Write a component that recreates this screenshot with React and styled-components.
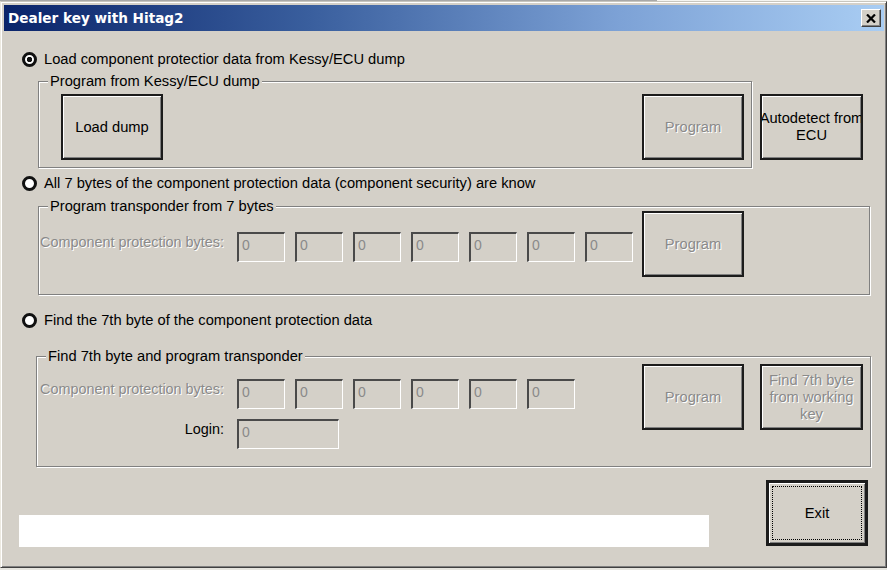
import styled, { createGlobalStyle, css } from "styled-components";

const GlobalStyle = createGlobalStyle`
  html, body {
    margin: 0;
    padding: 0;
    background: #e9e8e2;
  }
  body {
    font-family: "Liberation Sans", Arial, sans-serif;
  }
`;

const Screen = styled.div`
  width: 887px;
  height: 570px;
  overflow: hidden;
  background: #e6e5df;
  display: flex;
  flex-direction: column;
`;

const BackStrip = styled.div`
  height: 1px;
  display: flex;
`;

const BackPane = styled.div`
  width: ${(p) => p.$w};
  background: ${(p) => p.$bg};
`;

const Window = styled.div`
  width: 887px;
  height: 567px;
  box-sizing: border-box;
  background: #d4d0c8;
  border: 1px solid;
  border-color: #c8c6be #404040 #404040 #ece9e0;
  box-shadow: inset 1px 1px 0 #ffffff, inset -1px -1px 0 #808080;
  padding: 3px 2px 2px 3px;
  display: flex;
  flex-direction: column;
`;

const TitleBar = styled.div`
  height: 26px;
  display: flex;
  align-items: center;
  justify-content: space-between;
  padding: 0 3px 0 4px;
  background: linear-gradient(to right, #0a246a 0%, #3a5f9e 35%, #7da2d6 70%, #a9cdf3 100%);
`;

const Title = styled.span`
  color: #ffffff;
  font-family: "DejaVu Sans", Verdana, sans-serif;
  font-weight: bold;
  font-size: 13.6px;
`;

const CloseButton = styled.button`
  width: 20px;
  height: 18px;
  padding: 0;
  box-sizing: border-box;
  background: #d4d0c8;
  border: 1px solid;
  border-color: #ffffff #404040 #404040 #ffffff;
  box-shadow: inset -1px -1px 0 #808080;
  display: flex;
  align-items: center;
  justify-content: center;
`;

const Content = styled.div`
  flex: 1;
  display: flex;
  flex-direction: column;
  padding-left: 15px;
  font-size: 14.7px;
`;

const RadioRow = styled.label`
  display: flex;
  align-items: center;
  gap: 7px;
  height: 16px;
  margin-top: ${(p) => p.$top}px;
  margin-left: 3px;
  color: #000;
`;

const RadioDot = styled.span`
  width: 15px;
  height: 15px;
  box-sizing: border-box;
  border-radius: 50%;
  border: 3px solid #111;
  background: ${(p) =>
    p.$checked
      ? "radial-gradient(circle, #111 0 2.4px, #ffffff 3px)"
      : "#ffffff"};
`;

const SectionRow = styled.div`
  display: flex;
  align-items: flex-start;
  gap: 8px;
  margin-top: ${(p) => p.$top}px;
  margin-left: ${(p) => p.$left}px;
`;

const Group = styled.fieldset`
  margin: 0;
  padding: 0;
  width: ${(p) => p.$w}px;
  box-sizing: border-box;
  min-width: 0;
  border: 1px solid #808080;
  box-shadow: 1px 1px 0 #ffffff, inset 1px 1px 0 #ffffff;
`;

const Legend = styled.legend`
  margin-left: 9px;
  padding: 0 2px;
  line-height: 10px;
  color: #000;
  background: #d4d0c8;
`;

const GroupBody = styled.div`
  display: flex;
  align-items: flex-start;
  justify-content: ${(p) => p.$justify || "flex-start"};
  gap: 9px;
  padding: ${(p) => p.$pad};
`;

const Button = styled.button`
  width: ${(p) => p.$w || 103}px;
  height: 66px;
  flex-shrink: 0;
  box-sizing: border-box;
  margin-top: ${(p) => p.$top || 0}px;
  margin-left: ${(p) => p.$left || 0}px;
  padding: 0;
  background: #d4d0c8;
  border: ${(p) => (p.$default ? 3 : 2)}px solid #1c1c1c;
  box-shadow: inset 1px 1px 0 #ffffff, inset -1px -1px 0 #808080;
  font-family: "Liberation Sans", Arial, sans-serif;
  font-size: 14.7px;
  line-height: 17px;
  white-space: pre;
  overflow: hidden;
  color: #000;
  display: flex;
  align-items: center;
  justify-content: center;
  text-align: center;
  ${(p) =>
    p.disabled &&
    css`
      color: #8a8a8a;
      text-shadow: 1px 1px 0 #ffffff;
    `}
`;

const FocusRing = styled.span`
  align-self: stretch;
  flex: 1;
  margin: 3px;
  border: 1px dotted #000;
  display: flex;
  align-items: center;
  justify-content: center;
`;

const Fields = styled.div`
  width: 594px;
  flex-shrink: 0;
  display: flex;
  flex-direction: column;
  gap: 10px;
  margin-top: ${(p) => p.$top}px;
`;

const FieldRow = styled.div`
  display: flex;
  align-items: flex-start;
  gap: 13px;
`;

const FieldLabel = styled.span`
  width: 185px;
  text-align: right;
  font-size: 14.4px;
  line-height: 20px;
  white-space: nowrap;
  color: ${(p) => (p.$disabled ? "#8a8a8a" : "#000")};
  text-shadow: ${(p) => (p.$disabled ? "1px 1px 0 #ffffff" : "none")};
`;

const Boxes = styled.div`
  display: flex;
  gap: 10px;
`;

const ByteBox = styled.input`
  width: ${(p) => p.$w || 48}px;
  height: 30px;
  box-sizing: border-box;
  margin: 0;
  padding: 0 0 5px 3px;
  background: #d4d0c8;
  border-style: solid;
  border-width: 2px 1px 1px 2px;
  border-color: #4a4a4a #ffffff #ffffff #4a4a4a;
  font-family: "Liberation Sans", Arial, sans-serif;
  font-size: 14px;
  color: #8a8a8a;
  -webkit-text-fill-color: #8a8a8a;
  opacity: 1;
  outline: none;
`;

const BottomRow = styled.div`
  display: flex;
  align-items: flex-end;
  margin-top: 13px;
`;

const StatusBar = styled.div`
  width: 690px;
  height: 32px;
  background: #ffffff;
`;

const ExitWrap = styled.div`
  margin-left: 57px;
  margin-bottom: 1px;
`;

function CloseIcon() {
  return (
    <svg width="10" height="9" viewBox="0 0 10 9">
      <path d="M1 0.5 L9 8.5 M9 0.5 L1 8.5" stroke="#000" strokeWidth="2.2" />
    </svg>
  );
}

function ByteInputs({ count }) {
  return (
    <Boxes>
      {Array.from({ length: count }).map((_, i) => (
        <ByteBox key={i} value="0" disabled readOnly />
      ))}
    </Boxes>
  );
}

export default function App() {
  return (
    <>
      <GlobalStyle />
      <Screen>
        <BackStrip>
          <BackPane $w="657px" $bg="#a8a8a8" />
          <BackPane $w="230px" $bg="#f4f4f0" />
        </BackStrip>
        <Window>
          <TitleBar>
            <Title>Dealer key with Hitag2</Title>
            <CloseButton>
              <CloseIcon />
            </CloseButton>
          </TitleBar>

          <Content>
            <RadioRow $top={20}>
              <RadioDot $checked />
              Load component protectior data from Kessy/ECU dump
            </RadioRow>
            <SectionRow $top={9} $left={19}>
              <Group $w={714}>
                <Legend>Program from Kessy/ECU dump</Legend>
                <GroupBody $justify="space-between" $pad="8px 7px 7px 22px">
                  <Button $w={102}>Load dump</Button>
                  <Button $w={102} disabled>
                    Program
                  </Button>
                </GroupBody>
              </Group>
              <Button $top={18}>{"Autodetect from\nECU"}</Button>
            </SectionRow>

            <RadioRow $top={7}>
              <RadioDot />
              All 7 bytes of the component protection data (component security) are know
            </RadioRow>
            <SectionRow $top={10} $left={19}>
              <Group $w={832}>
                <Legend>Program transponder from 7 bytes</Legend>
                <GroupBody $pad="0 0 17px 0">
                  <Fields $top={21}>
                    <FieldRow>
                      <FieldLabel $disabled>Component protection bytes:</FieldLabel>
                      <ByteInputs count={7} />
                    </FieldRow>
                  </Fields>
                  <Button $w={102} disabled>
                    Program
                  </Button>
                </GroupBody>
              </Group>
            </SectionRow>

            <RadioRow $top={17}>
              <RadioDot />
              Find the 7th byte of the component protection data
            </RadioRow>
            <SectionRow $top={23} $left={17}>
              <Group $w={835}>
                <Legend>Find 7th byte and program transponder</Legend>
                <GroupBody $pad="3px 0 17px 2px">
                  <Fields $top={15}>
                    <FieldRow>
                      <FieldLabel $disabled>Component protection bytes:</FieldLabel>
                      <ByteInputs count={6} />
                    </FieldRow>
                    <FieldRow>
                      <FieldLabel>Login:</FieldLabel>
                      <ByteBox $w={102} value="0" disabled readOnly />
                    </FieldRow>
                  </Fields>
                  <Button $w={102} disabled>
                    Program
                  </Button>
                  <Button $left={7} disabled>
                    {"Find 7th byte\nfrom working\nkey"}
                  </Button>
                </GroupBody>
              </Group>
            </SectionRow>

            <BottomRow>
              <StatusBar />
              <ExitWrap>
                <Button $w={102} $default>
                  <FocusRing>Exit</FocusRing>
                </Button>
              </ExitWrap>
            </BottomRow>
          </Content>
        </Window>
      </Screen>
    </>
  );
}
